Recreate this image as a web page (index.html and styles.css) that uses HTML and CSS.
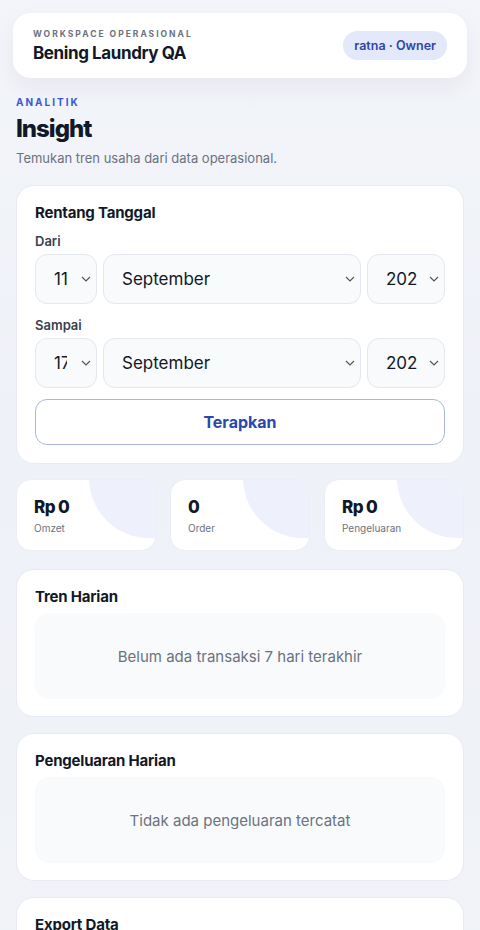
FILE: index.html
```html
<!DOCTYPE html>
<html lang="id">
<head>
    <meta charset="UTF-8">
    <meta name="viewport" content="width=device-width, initial-scale=1.0">
    <title>Insight - Bening Laundry QA</title>
    <link rel="stylesheet" href="styles.css">
</head>
<body>
    <header class="topbar">
        <div class="workspace">
            <div class="eyebrow">Workspace Operasional</div>
            <div class="workspace-name">Bening Laundry QA</div>
        </div>
        <span class="user-badge">ratna · Owner</span>
    </header>

    <main class="page">
        <div class="page-head">
            <div class="section-tag">Analitik</div>
            <h1>Insight</h1>
            <p class="subtitle">Temukan tren usaha dari data operasional.</p>
        </div>

        <!-- Filter rentang tanggal -->
        <section class="card">
            <h2>Rentang Tanggal</h2>
            <label class="field-label">Dari</label>
            <div class="date-row">
                <select class="select day"><option>11</option></select>
                <select class="select month"><option>September</option></select>
                <select class="select year"><option>2024</option></select>
            </div>
            <label class="field-label second">Sampai</label>
            <div class="date-row">
                <select class="select day"><option>17</option></select>
                <select class="select month"><option>September</option></select>
                <select class="select year"><option>2024</option></select>
            </div>
            <button class="btn-apply" type="button">Terapkan</button>
        </section>

        <div class="stats">
            <div class="stat">
                <div class="stat-value">Rp 0</div>
                <div class="stat-label">Omzet</div>
            </div>
            <div class="stat">
                <div class="stat-value">0</div>
                <div class="stat-label">Order</div>
            </div>
            <div class="stat">
                <div class="stat-value">Rp 0</div>
                <div class="stat-label">Pengeluaran</div>
            </div>
        </div>

        <section class="card">
            <h2>Tren Harian</h2>
            <div class="empty">Belum ada transaksi 7 hari terakhir</div>
        </section>

        <section class="card">
            <h2>Pengeluaran Harian</h2>
            <div class="empty">Tidak ada pengeluaran tercatat</div>
        </section>

        <section class="card">
            <h2>Export Data</h2>
            <div class="empty">Unduh laporan dalam format CSV</div>
        </section>
    </main>
</body>
</html>
```

FILE: styles.css
```css
* {
    box-sizing: border-box;
}

body {
    margin: 0;
    font-family: Inter, "Noto Sans", Arial, sans-serif;
    color: #111827;
    background: linear-gradient(180deg, #f3f5fa 0%, #eef1f7 40%, #f1f3f7 100%);
    min-height: 100vh;
}

.topbar {
    margin: 13px 13px 0;
    height: 65px;
    padding: 0 20px;
    background: #fff;
    border-radius: 18px;
    display: flex;
    align-items: center;
    justify-content: space-between;
    box-shadow: 0 10px 24px rgba(30, 41, 59, 0.06);
}

.workspace {
    padding-top: 1px;
}

.eyebrow {
    font-size: 8.5px;
    font-weight: 700;
    letter-spacing: 2px;
    text-transform: uppercase;
    color: #6b7280;
    margin-bottom: 4px;
}

.workspace-name {
    font-size: 17px;
    font-weight: 700;
    letter-spacing: -0.4px;
}

.user-badge {
    background: #e3e8fb;
    color: #2f46a8;
    font-size: 12.5px;
    font-weight: 600;
    padding: 7px 11px;
    border-radius: 999px;
}

.page {
    padding: 17px 16px 24px;
    display: flex;
    flex-direction: column;
    gap: 16px;
}

.page-head {
    padding: 1px 0 3px;
}

.section-tag {
    font-size: 10px;
    font-weight: 700;
    letter-spacing: 2px;
    text-transform: uppercase;
    color: #3b58d6;
}

h1 {
    margin: 4px 0 0;
    font-size: 24px;
    font-weight: 800;
    letter-spacing: -1px;
    line-height: 34px;
}

.subtitle {
    margin: 4px 0 0;
    font-size: 13px;
    color: #6b7280;
}

.card {
    background: #fff;
    border: 1px solid #e8ebf1;
    border-radius: 18px;
    padding: 17px 18px 18px;
}

h2 {
    margin: 0;
    font-size: 15px;
    font-weight: 700;
    letter-spacing: -0.2px;
    line-height: 20px;
}

.field-label {
    display: block;
    margin: 10px 0 5px;
    font-size: 13px;
    font-weight: 600;
    line-height: 16px;
    color: #374151;
}

.field-label.second {
    margin-top: 13px;
}

.date-row {
    display: flex;
    gap: 6px;
}

.select {
    appearance: none;
    -webkit-appearance: none;
    height: 50px;
    padding: 0 26px 0 18px;
    font-family: inherit;
    font-size: 17px;
    color: #111827;
    background-color: #f8fafc;
    background-image: url("data:image/svg+xml,%3Csvg xmlns='http://www.w3.org/2000/svg' width='10' height='6' viewBox='0 0 10 6'%3E%3Cpath d='M1 1l4 4 4-4' fill='none' stroke='%23555' stroke-width='1.2'/%3E%3C/svg%3E");
    background-repeat: no-repeat;
    background-position: right 5px center;
    border: 1px solid #e3e7ee;
    border-radius: 12px;
}

.select.day {
    width: 62px;
    padding-right: 29px;
}

.select.month {
    flex: 1;
}

.select.year {
    width: 78px;
}

.btn-apply {
    margin-top: 11px;
    width: 100%;
    height: 46px;
    background: #fff;
    border: 1px solid #a9b6dc;
    border-radius: 12px;
    font-family: inherit;
    font-size: 16px;
    font-weight: 700;
    color: #2b48ad;
}

.stats {
    display: grid;
    grid-template-columns: repeat(3, 1fr);
    gap: 14px;
    margin: -1px 0 2px;
}

.stat {
    position: relative;
    overflow: hidden;
    height: 72px;
    background: #fff;
    border: 1px solid #eceef3;
    border-radius: 15px;
    padding: 17px 17px 0;
}

.stat::after {
    content: "";
    position: absolute;
    width: 120px;
    height: 120px;
    top: -62px;
    right: -54px;
    border-radius: 50%;
    background: #eef0fb;
}

.stat-value,
.stat-label {
    position: relative;
    z-index: 1;
}

.stat-value {
    font-size: 17px;
    font-weight: 800;
    letter-spacing: -0.6px;
    line-height: 20px;
}

.stat-label {
    margin-top: 5px;
    font-size: 10px;
    color: #6b7280;
}

.empty {
    margin-top: 6px;
    height: 86px;
    background: #f8fafc;
    border-radius: 14px;
    display: flex;
    align-items: center;
    justify-content: center;
    font-size: 15px;
    color: #6b7280;
}

.card .empty:last-child {
    margin-bottom: -1px;
}
```
